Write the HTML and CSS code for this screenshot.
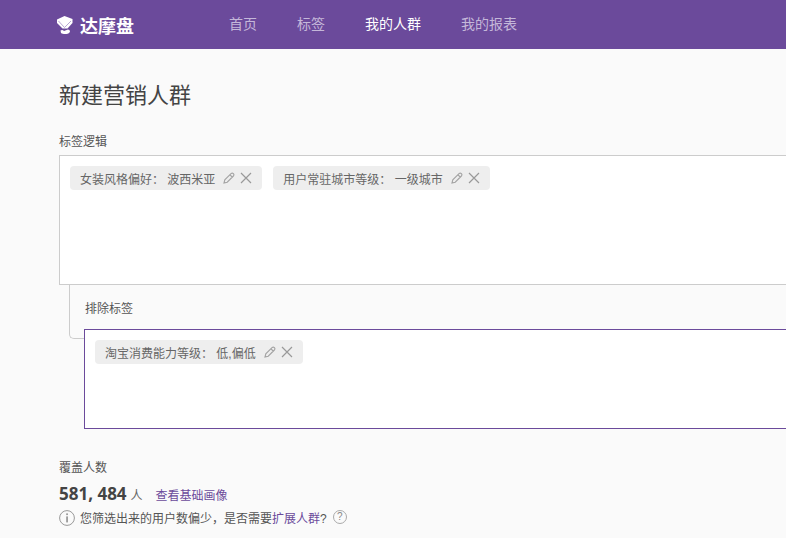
FILE: index.html
```html
<!DOCTYPE html>
<html lang="zh-CN">
<head>
    <meta charset="UTF-8">
    <title>新建营销人群</title>
    <link rel="stylesheet" href="styles.css">
</head>
<body>
    <header class="topbar">
        <div class="logo">
            <svg class="logo-icon" width="18" height="20" viewBox="0 0 18 20">
                <path d="M1 4.5 L8.5 1 L16.5 4 L16.5 8 L11.5 13.5 L6.5 13.5 L1 8 Z" fill="#fff"/>
                <path d="M2.5 6 L8.5 12.5 L15 6" fill="none" stroke="#b9a8d4" stroke-width="1"/>
                <path d="M4.5 15.5 C6 14.5 7 15 8 16 L12 14.5 C14 15 14.5 16 13.5 17.5 C12 19.5 7 19.5 5 18 Z" fill="#fff"/>
            </svg>
            <span class="logo-text">达摩盘</span>
        </div>
        <nav class="nav">
            <a class="nav-item">首页</a>
            <a class="nav-item">标签</a>
            <a class="nav-item active">我的人群</a>
            <a class="nav-item">我的报表</a>
        </nav>
    </header>

    <main class="content">
        <h1 class="title">新建营销人群</h1>

        <div class="field-label">标签逻辑</div>
        <div class="tag-box">
            <span class="tag">
                <span class="tag-text">女装风格偏好： 波西米亚</span>
                <svg class="tag-icon" viewBox="0 0 12 12"><path d="M1 11 L1.8 7.8 L8 1.6 C8.8 0.9 9.6 0.9 10.4 1.6 C11.1 2.4 11.1 3.2 10.4 4 L4.2 10.2 Z M7 2.8 L9.2 5" fill="none" stroke="#a3a3a3" stroke-width="1.1"/></svg>
                <svg class="tag-icon close" viewBox="0 0 12 12"><path d="M1 1 L11 11 M11 1 L1 11" fill="none" stroke="#999" stroke-width="1.2"/></svg>
            </span>
            <span class="tag">
                <span class="tag-text">用户常驻城市等级： 一级城市</span>
                <svg class="tag-icon" viewBox="0 0 12 12"><path d="M1 11 L1.8 7.8 L8 1.6 C8.8 0.9 9.6 0.9 10.4 1.6 C11.1 2.4 11.1 3.2 10.4 4 L4.2 10.2 Z M7 2.8 L9.2 5" fill="none" stroke="#a3a3a3" stroke-width="1.1"/></svg>
                <svg class="tag-icon close" viewBox="0 0 12 12"><path d="M1 1 L11 11 M11 1 L1 11" fill="none" stroke="#999" stroke-width="1.2"/></svg>
            </span>
        </div>

        <div class="exclude">
            <div class="exclude-head">排除标签</div>
            <div class="tag-box exclude-box">
                <span class="tag">
                    <span class="tag-text">淘宝消费能力等级： 低,偏低</span>
                    <svg class="tag-icon" viewBox="0 0 12 12"><path d="M1 11 L1.8 7.8 L8 1.6 C8.8 0.9 9.6 0.9 10.4 1.6 C11.1 2.4 11.1 3.2 10.4 4 L4.2 10.2 Z M7 2.8 L9.2 5" fill="none" stroke="#a3a3a3" stroke-width="1.1"/></svg>
                    <svg class="tag-icon close" viewBox="0 0 12 12"><path d="M1 1 L11 11 M11 1 L1 11" fill="none" stroke="#999" stroke-width="1.2"/></svg>
                </span>
            </div>
        </div>

        <div class="field-label cover-label">覆盖人数</div>
        <div class="cover-row">
            <span class="cover-num">581, 484</span>
            <span class="cover-unit">人</span>
            <a class="link">查看基础画像</a>
        </div>
        <div class="hint">
            <svg class="hint-icon" width="16" height="16" viewBox="0 0 16 16">
                <circle cx="8" cy="8" r="7.4" fill="none" stroke="#999"/>
                <rect x="7.3" y="3.4" width="1.5" height="1.7" fill="#888"/>
                <rect x="7.3" y="6.4" width="1.5" height="6" fill="#888"/>
            </svg>
            <span>您筛选出来的用户数偏少，是否需要<a class="link">扩展人群</a>?</span>
            <span class="help">?</span>
        </div>
    </main>
</body>
</html>
```

FILE: styles.css
```css
body {
    margin: 0;
    background: #fafafa;
    color: #555;
    font-family: "Liberation Sans", "Noto Sans CJK SC", sans-serif;
    font-size: 12px;
    overflow: hidden;
}

.topbar {
    display: flex;
    align-items: center;
    height: 49px;
    background: #6b4a9b;
}

.logo {
    display: flex;
    align-items: center;
    box-sizing: border-box;
    width: 229px;
    padding-left: 56px;
}

.logo-icon {
    margin-right: 6px;
}

.logo-text {
    color: #fff;
    font-size: 18px;
    font-weight: bold;
}

.nav {
    display: flex;
    gap: 40px;
    padding-bottom: 3px;
}

.nav-item {
    color: #c4b7d9;
    font-size: 14px;
}

.nav-item.active {
    color: #fff;
}

.content {
    padding-left: 59px;
}

.title {
    margin: 32px 0 0;
    color: #444;
    font-size: 22px;
    font-weight: normal;
    line-height: 30px;
}

.field-label {
    margin-top: 22px;
    line-height: 18px;
    color: #555;
}

.tag-box {
    display: flex;
    align-items: flex-start;
    gap: 11px;
    box-sizing: border-box;
    height: 130px;
    margin-top: 4px;
    padding: 10px;
    background: #fff;
    border: 1px solid #ccc;
    border-right: none;
}

.tag {
    display: flex;
    align-items: center;
    height: 24px;
    padding: 0 10px;
    background: #eee;
    border-radius: 4px;
    color: #666;
}

.tag-text {
    white-space: pre;
}

.tag-icon {
    width: 12px;
    height: 12px;
    margin-left: 8px;
}

.tag-icon.close {
    margin-left: 5px;
}

.exclude {
    position: relative;
    height: 144px;
    margin-left: 10px;
}

/* the bracket behind the excluded tags */
.exclude::before {
    content: "";
    position: absolute;
    left: 0;
    top: -1px;
    width: 30px;
    height: 54px;
    border-left: 1px solid #ccc;
    border-bottom: 1px solid #ccc;
    border-bottom-left-radius: 5px;
}

.exclude-head {
    padding: 15px 0 0 16px;
    line-height: 18px;
    color: #555;
}

.exclude-box {
    position: relative;
    height: 100px;
    margin-top: 11px;
    margin-left: 15px;
    border-color: #6b4a9b;
}

.cover-label {
    margin-top: 30px;
}

.cover-row {
    display: flex;
    align-items: baseline;
    margin-top: 5px;
    line-height: 24px;
}

.cover-num {
    color: #444;
    font-family: "Open Sans", sans-serif;
    font-size: 17px;
    font-weight: bold;
}

.cover-unit {
    margin-left: 4px;
    color: #666;
}

.link {
    color: #6b4a9b;
}

.cover-row .link {
    margin-left: 13px;
}

.hint {
    display: flex;
    align-items: center;
    margin-top: 1px;
    color: #555;
}

.hint-icon {
    margin-right: 5px;
}

.help {
    box-sizing: border-box;
    width: 14px;
    height: 14px;
    margin-left: 6px;
    margin-bottom: 2px;
    border: 1px solid #aaa;
    border-radius: 50%;
    color: #888;
    font-size: 10px;
    line-height: 12px;
    text-align: center;
}
```
